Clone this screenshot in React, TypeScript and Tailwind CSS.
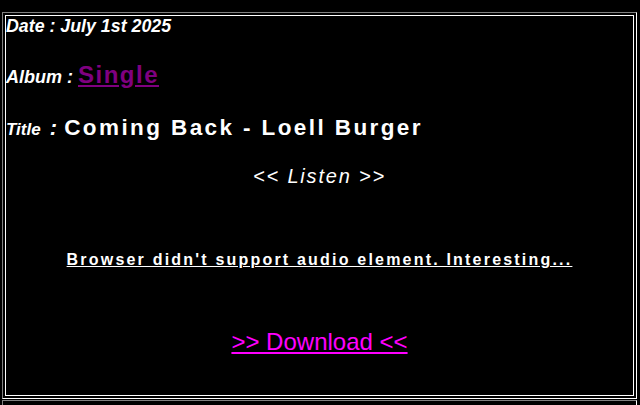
import React from "react";

export default function App() {
  return (
    <div className="w-[640px] h-[405px] overflow-hidden bg-black font-['Liberation_Sans',Arial,sans-serif] text-white">
      <div className="ml-[2px] mt-[12px] w-[635px] h-[387px] border border-t-[#808080] border-l-[#808080] border-r-white border-b-white p-[2px]">
        <div className="h-full border border-white flex flex-col">
          <div className="mt-[2px] text-[17.8px] leading-none font-bold italic">Date : July 1st 2025</div>
          <div className="mt-[27px] flex items-baseline">
            <span className="text-[18px] leading-none font-bold italic">Album :&nbsp;</span>
            <a href="#" className="text-[24px] leading-none font-bold text-[#800080] underline tracking-[1.5px]">Single</a>
          </div>
          <div className="mt-[30px] flex items-baseline whitespace-pre">
            <span className="text-[17px] leading-none font-bold italic">Title</span>
            <span className="pl-[3px] text-[22px] leading-none font-bold italic"> : </span>
            <span className="pl-[1px] text-[22.5px] leading-none font-bold tracking-[2.4px]">Coming Back - Loell Burger</span>
          </div>
          <div className="mt-[27px] text-center text-[20px] leading-none italic tracking-[1.8px]">&lt;&lt; Listen &gt;&gt;</div>
          <div className="mt-[62px] text-center">
            <span className="text-[16px] leading-none font-bold underline tracking-[2.2px]">Browser didn't support audio element. Interesting...</span>
          </div>
          <div className="mt-[58px] text-center">
            <a href="#" className="text-[24px] leading-none text-[#ff00ff] underline">&gt;&gt; Download &lt;&lt;</a>
          </div>
        </div>
      </div>
      <div className="ml-[2px] mt-[1px] w-[635px] h-[20px] border border-t-[#808080] border-l-[#808080] border-r-white border-b-white"></div>
    </div>
  );
}
